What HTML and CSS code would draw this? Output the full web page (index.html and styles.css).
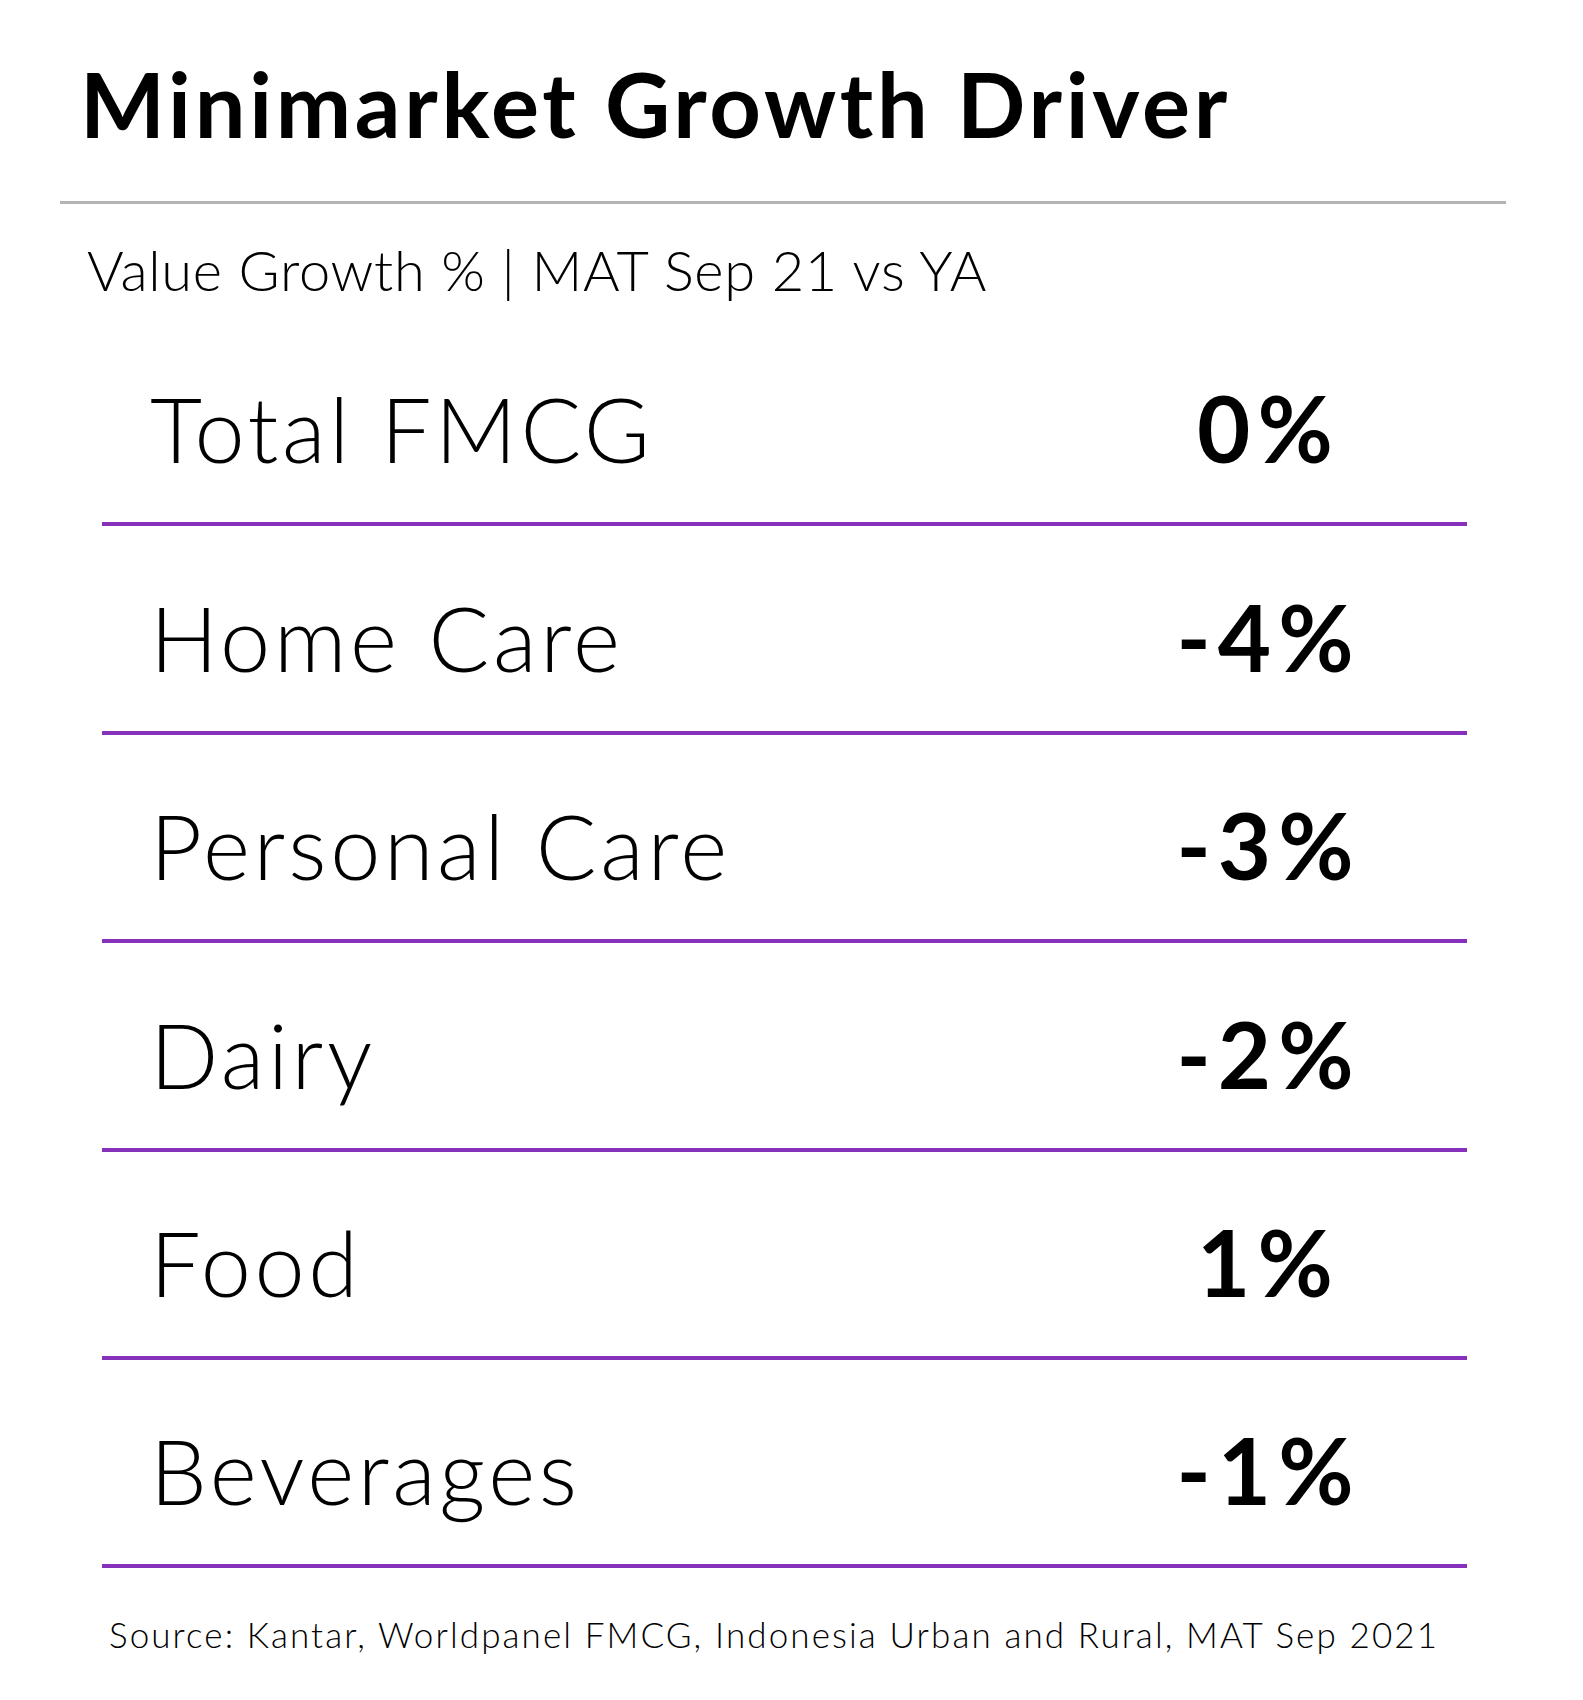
FILE: index.html
```html
<!DOCTYPE html>
<html lang="en">
<head>
<meta charset="utf-8">
<title>Minimarket Growth Driver</title>
<link rel="stylesheet" href="styles.css">
</head>
<body>
<main class="page">
  <h1 class="title">Minimarket Growth Driver</h1>
  <hr class="rule">
  <p class="subtitle">Value Growth % | MAT Sep 21 vs YA</p>
  <div class="table">
    <div class="row"><span class="label">Total FMCG</span><span class="value">0%</span></div>
    <div class="row"><span class="label">Home Care</span><span class="value">-4%</span></div>
    <div class="row"><span class="label">Personal Care</span><span class="value">-3%</span></div>
    <div class="row"><span class="label">Dairy</span><span class="value">-2%</span></div>
    <div class="row"><span class="label">Food</span><span class="value">1%</span></div>
    <div class="row"><span class="label">Beverages</span><span class="value">-1%</span></div>
  </div>
  <p class="source">Source: Kantar, Worldpanel FMCG, Indonesia Urban and Rural, MAT Sep 2021</p>
</main>
</body>
</html>
```

FILE: styles.css
```css
html, body {
  margin: 0;
  padding: 0;
  background: #ffffff;
}

.page {
  width: 1583px;
  min-height: 1700px;
  box-sizing: border-box;
  padding-top: 58px;
  font-family: "Lato", "Liberation Sans", sans-serif;
  color: #000000;
}

.title {
  margin: 0 0 0 80px;
  font-size: 90px;
  line-height: 90px;
  font-weight: 700;
  letter-spacing: 3.7px;
}

.rule {
  margin: 53px 0 0 60px;
  width: 1446px;
  height: 3px;
  border: 0;
  background: #b3b3b3;
}

.subtitle {
  margin: 38px 0 0 87px;
  font-size: 56px;
  line-height: 56px;
  font-weight: 300;
  letter-spacing: 0.7px;
}

.table {
  margin: 20px 0 0 102px;
  width: 1365px;
}

.row {
  display: grid;
  grid-template-columns: 1fr 400px;
  align-items: baseline;
  padding: 65.4px 2px 49px 48px;
  border-bottom: 4px solid #8531b9;
}

.label {
  font-size: 90px;
  line-height: 90px;
  font-weight: 300;
  letter-spacing: 3.6px;
}

.value {
  font-size: 92px;
  line-height: 90px;
  font-weight: 700;
  letter-spacing: 7px;
  padding-left: 7px;
  text-align: center;
}

.source {
  margin: 49px 0 0 109px;
  font-size: 35px;
  line-height: 35px;
  font-weight: 300;
  letter-spacing: 2.1px;
}
```
